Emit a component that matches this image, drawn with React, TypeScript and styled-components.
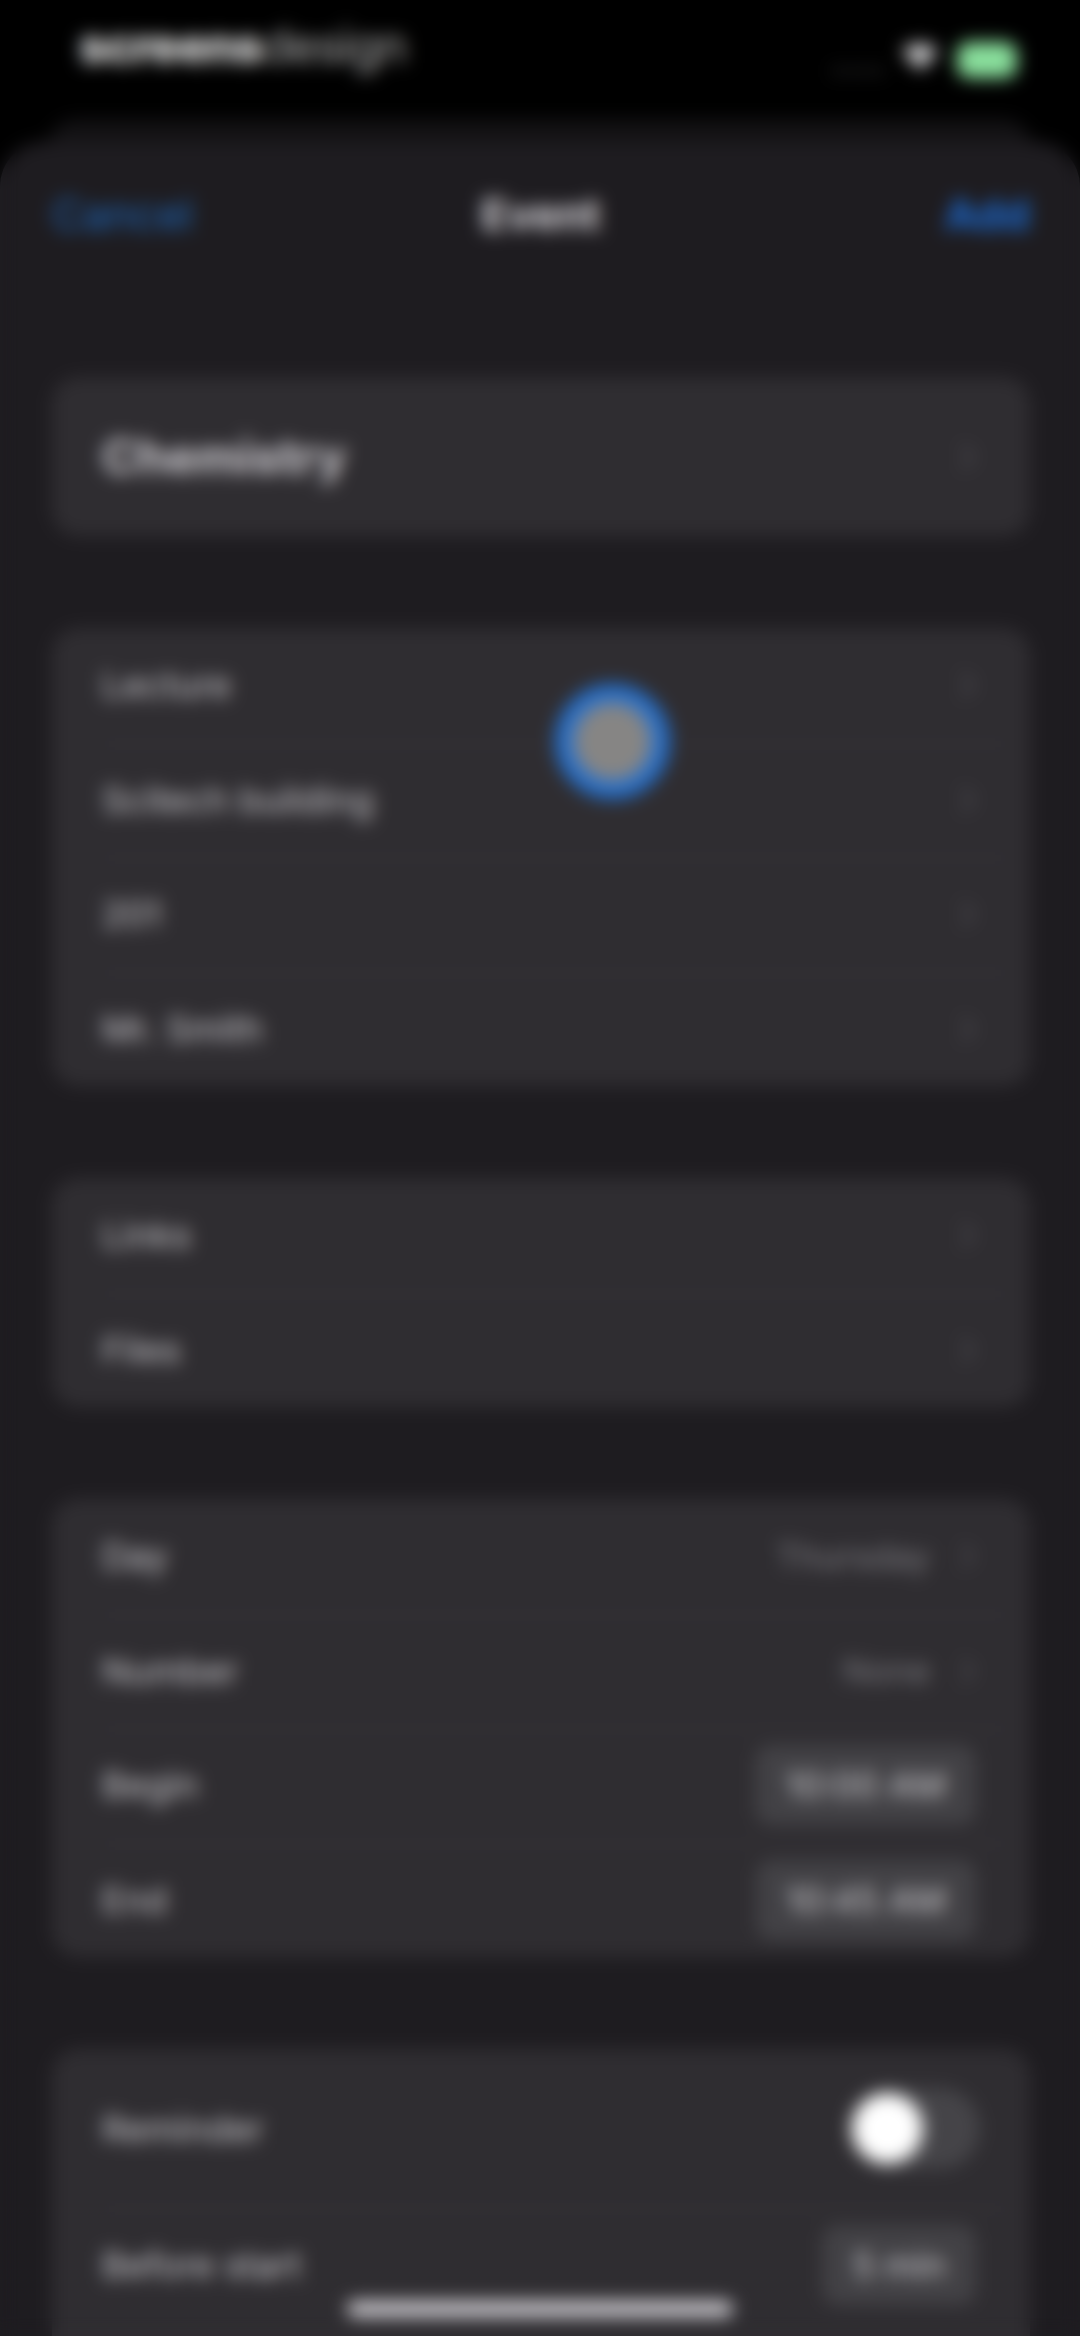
import styled, { createGlobalStyle } from "styled-components";

type RowData = {
    label: string;
    value?: string;
    pill?: string;
    toggle?: boolean;
    tall?: boolean;
};

const details: RowData[] = [
    { label: "Lecture" },
    { label: "Scitech building" },
    { label: "201" },
    { label: "Mr. Smith" },
];

const attachments: RowData[] = [{ label: "Links" }, { label: "Files" }];

const schedule: RowData[] = [
    { label: "Day", value: "Thursday" },
    { label: "Number", value: "None" },
    { label: "Begin", pill: "10:00 AM" },
    { label: "End", pill: "10:45 AM" },
];

const reminder: RowData[] = [
    { label: "Reminder", toggle: true, tall: true },
    { label: "Before start", pill: "5 min" },
];

const Chevron = () => (
    <ChevronIcon viewBox="0 0 16 28">
        <path d="M3 3l10 11L3 25" fill="none" stroke="currentColor" strokeWidth="4" strokeLinecap="round" strokeLinejoin="round" />
    </ChevronIcon>
);

const Group = ({ rows, open }: { rows: RowData[]; open?: boolean }) => (
    <Card $open={open}>
        {rows.map(({ label, value, pill, toggle, tall }) => (
            <Row key={label} $tall={tall}>
                <Label>{label}</Label>
                {value && <Value>{value}</Value>}
                {pill && <Pill>{pill}</Pill>}
                {toggle && <Toggle><Knob /></Toggle>}
                {!pill && !toggle && <Chevron />}
            </Row>
        ))}
    </Card>
);

export default function App() {
    return (
        <Screen>
            <GlobalStyle />
            <StatusBar>
                <Brand><b>screens</b>design</Brand>
                <Status>
                    <Signal><i /><i /><i /><i /></Signal>
                    <WifiIcon viewBox="0 0 42 32">
                        <path d="M21 31L1 9a30 30 0 0 1 40 0z" fill="currentColor" />
                    </WifiIcon>
                    <Battery />
                </Status>
            </StatusBar>
            <BackSheet />
            <Sheet>
                <Header>
                    <Action>Cancel</Action>
                    <Title>Event</Title>
                    <Action $strong>Add</Action>
                </Header>
                <Form>
                    <Card>
                        <Row $tall>
                            <Subject>Chemistry</Subject>
                            <Chevron />
                        </Row>
                    </Card>
                    <Group rows={details} />
                    <Group rows={attachments} />
                    <Group rows={schedule} />
                    <Group rows={reminder} open />
                </Form>
            </Sheet>
            <TouchPoint />
            <HomeIndicator />
            <Haze />
        </Screen>
    );
}

const GlobalStyle = createGlobalStyle`
    body {
        margin: 0;
        background: #000;
    }

    * {
        box-sizing: border-box;
    }
`;

const Screen = styled.main`
    position: relative;
    display: flex;
    flex-direction: column;
    width: 1080px;
    height: 2336px;
    overflow: hidden;
    background: #000;
    color: #fff;
    font-family: Inter, "Liberation Sans", sans-serif;
    font-size: 36px;
`;

const StatusBar = styled.div`
    display: flex;
    justify-content: space-between;
    height: 119px;
    padding: 0 63px 0 79px;
`;

const Brand = styled.div`
    padding-top: 17px;
    font-size: 48px;
    line-height: 58px;
    letter-spacing: -1.2px;
    color: #b4b4b4;

    b {
        font-weight: 800;
        color: #e8e8e8;
    }
`;

const Status = styled.div`
    display: flex;
    align-items: center;
    gap: 18px;
    height: 119px;
`;

const Signal = styled.div`
    display: flex;
    gap: 6px;
    padding-top: 22px;

    i {
        width: 8px;
        height: 8px;
        border-radius: 50%;
        background: #2c2c2e;
    }
`;

const WifiIcon = styled.svg`
    width: 38px;
    height: 32px;
    margin-bottom: 5px;
    color: #d0d0d2;
`;

const Battery = styled.div`
    width: 60px;
    height: 36px;
    border-radius: 12px;
    background: #8ae09d;
`;

const BackSheet = styled.div`
    height: 50px;
    margin: 0 48px -27px;
    border-radius: 28px 28px 0 0;
    background: #131214;
`;

const Sheet = styled.section`
    position: relative;
    display: flex;
    flex: 1;
    flex-direction: column;
    padding: 0 50px 0 52px;
    border-radius: 44px 44px 0 0;
    background: #1e1c20;
`;

const Header = styled.header`
    display: grid;
    grid-template-columns: 1fr auto 1fr;
    align-items: center;
    height: 144px;
    margin-bottom: 91px;
    font-size: 43px;
`;

const Action = styled.span<{ $strong?: boolean }>`
    color: ${({ $strong }) => ($strong ? "#1c6ad0" : "#1f68bc")};
    font-weight: ${({ $strong }) => ($strong ? 700 : 400)};
    text-align: ${({ $strong }) => ($strong ? "right" : "left")};
`;

const Title = styled.h1`
    margin: 0;
    font-size: 43px;
    font-weight: 700;
    color: #dcdadf;
`;

const Form = styled.div`
    display: flex;
    flex: 1;
    flex-direction: column;
    gap: 92px;
`;

// the last group runs on past the bottom edge
const Card = styled.div<{ $open?: boolean }>`
    flex: ${({ $open }) => ($open ? 1 : "none")};
    border-radius: ${({ $open }) => ($open ? "26px 26px 0 0" : "26px")};
    background: #2f2d31;
`;

const Row = styled.div<{ $tall?: boolean }>`
    display: flex;
    align-items: center;
    height: ${({ $tall }) => ($tall ? "159px" : "114.5px")};
    margin: 0 22px 0 50px;
    padding-right: 32px;

    & + & {
        padding-bottom: 2px;
        border-top: 2px solid #36343a;
    }
`;

const Label = styled.span`
    margin-right: auto;
    color: #cac9cd;
`;

const Subject = styled(Label)`
    font-size: 48px;
    font-weight: 700;
    color: #d0ced3;
`;

const Value = styled.span`
    margin-right: 30px;
    font-size: 34.5px;
    color: #7b7a7f;
`;

const Pill = styled.span`
    display: flex;
    align-items: center;
    height: 80px;
    padding: 0 30px;
    border-radius: 16px;
    background: #424145;
    color: #cfced2;
`;

const ChevronIcon = styled.svg`
    width: 16px;
    height: 28px;
    color: #4b4a4f;
`;

const Toggle = styled.div`
    width: 133px;
    height: 81px;
    margin-right: -4px;
    padding: 5px;
    border-radius: 41px;
    background: #454448;
`;

const Knob = styled.div`
    width: 71px;
    height: 71px;
    border-radius: 50%;
    background: #fff;
`;

const TouchPoint = styled.div`
    position: absolute;
    left: 555px;
    top: 684px;
    width: 115px;
    height: 115px;
    border: 18px solid #266fca;
    border-radius: 50%;
    background: #868584;
`;

const HomeIndicator = styled.div`
    position: absolute;
    left: 347px;
    bottom: 19px;
    width: 386px;
    height: 16px;
    border-radius: 8px;
    background: #cccacf;
`;

// softens the whole screen
const Haze = styled.div`
    position: absolute;
    inset: 0;
    backdrop-filter: blur(9px);
`;
